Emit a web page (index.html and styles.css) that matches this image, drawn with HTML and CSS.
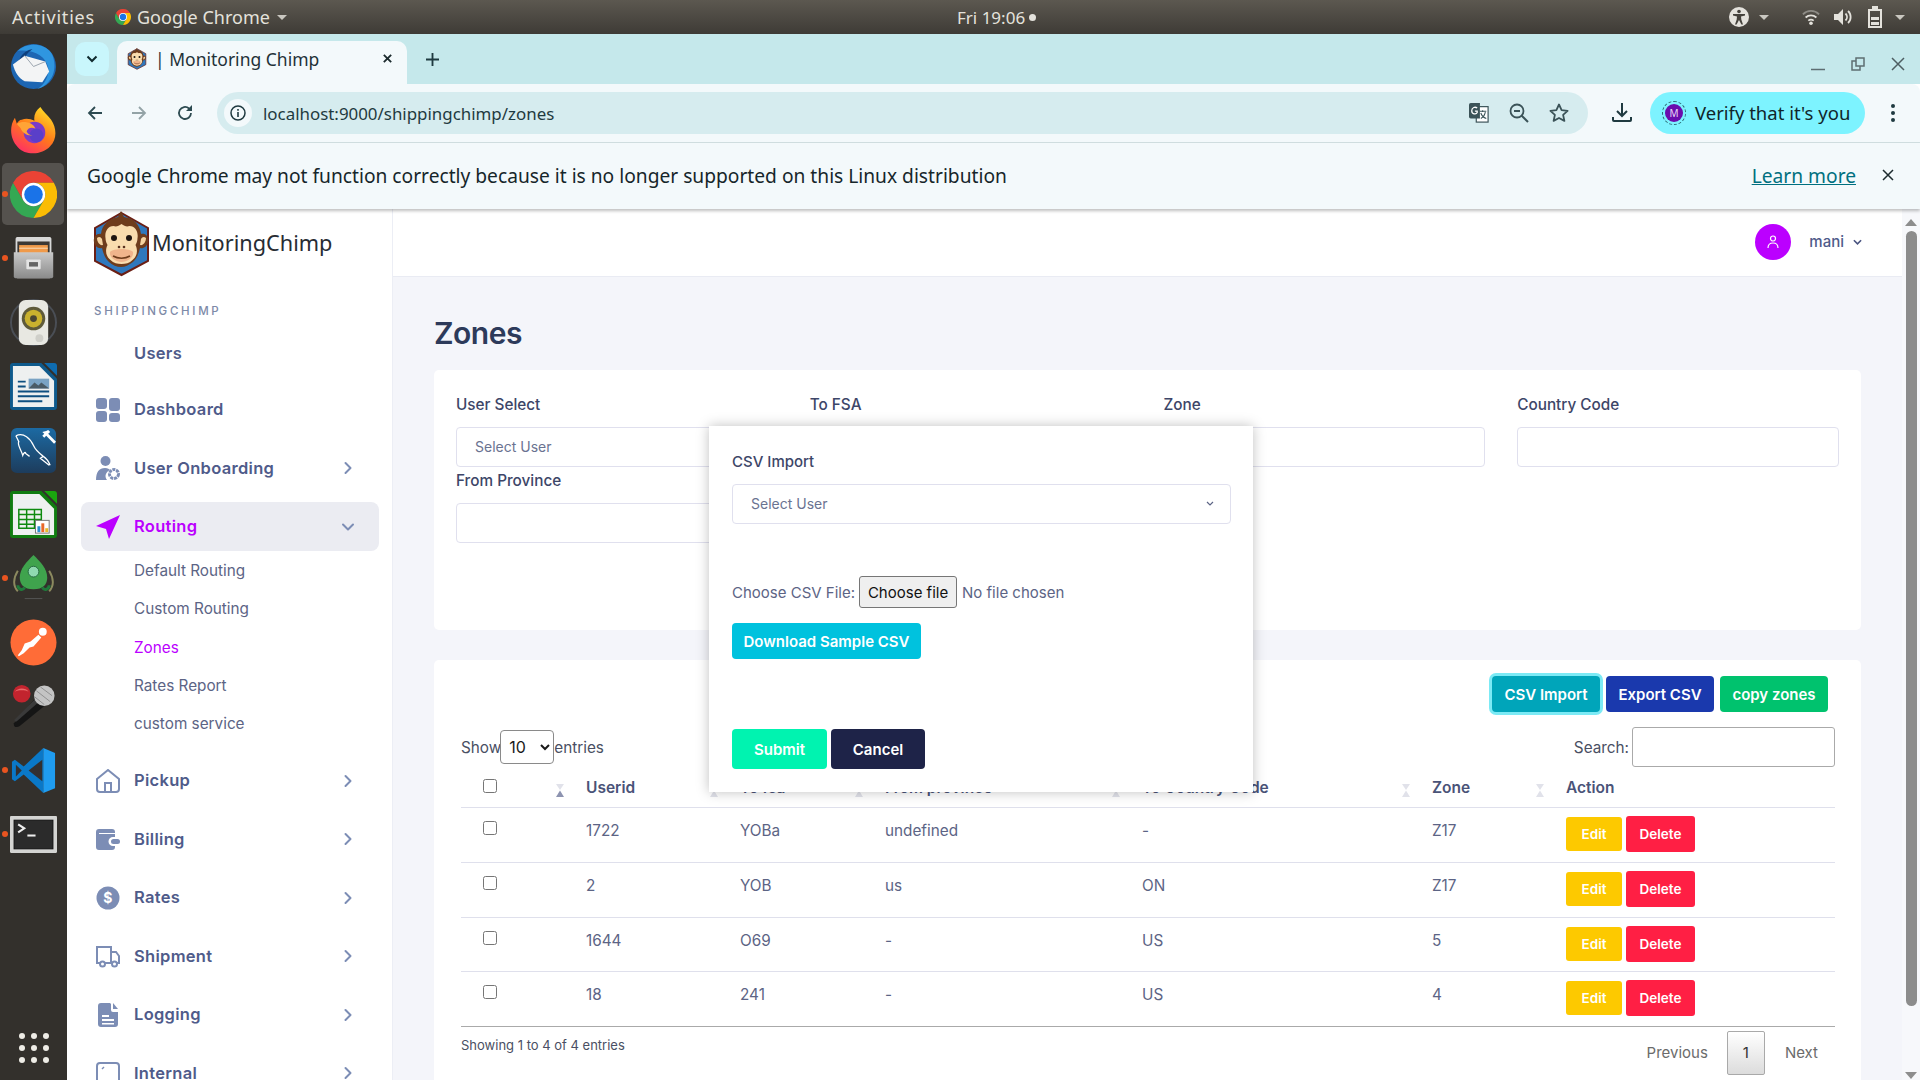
FILE: index.html
```html
<!DOCTYPE html>
<html lang="en">
  <head>
    <meta charset="UTF-8" />
    <meta name="viewport" content="width=device-width, initial-scale=1.0" />
    <title>Monitoring Chimp</title>
    <link rel="stylesheet" href="styles.css">
  </head>

  <body>
    <svg class="sprite" aria-hidden="true">
      <symbol id="chrome" viewBox="0 0 48 48">
        <path fill="#34a853" d="M3.2 12A24 24 0 0 0 24 48L34.4 30A12 12 0 0 1 13.6 30Z" />
        <path fill="#ea4335" d="M3.2 12A24 24 0 0 1 44.8 12H24A12 12 0 0 0 13.6 30Z" />
        <path fill="#fbbc04" d="M44.8 12A24 24 0 0 1 24 48L34.4 30A12 12 0 0 0 24 12Z" />
        <circle cx="24" cy="24" r="12" fill="#fff" />
        <circle cx="24" cy="24" r="9.5" fill="#1a73e8" />
      </symbol>
      <symbol id="chimp" viewBox="0 0 57 66">
        <path fill="#2f78bd" stroke="#6b1f14" stroke-width="2" d="M28.5 2 55 17v33L28.5 64 2 50V17z" />
        <path fill="#6e3c1c" d="M28 0l3 6c10 1 16 8 17 17 5-1 8 3 7 8s-5 7-8 6c-1 5-3 10-7 14-4 3-8 5-12 5s-9-2-12-5c-4-4-6-9-7-14-4 1-7-2-8-6s2-9 7-8C9 14 15 8 25 6z" />
        <path fill="#f6d3a0" d="M4 27c2-2 4-1 5 1l1 6c-3 1-6-3-6-7zM53 27c-2-2-4-1-5 1l-1 6c3 1 6-3 6-7z" />
        <path fill="#f9dcae" d="M28.5 13c-3 2-5 3-8 2-6 0-9 6-8 12 0 3 1 5 2 7-3 6-1 12 3 15 3 3 7 4 11 4s8-1 11-4c4-3 6-9 3-15 1-2 2-4 2-7 1-6-2-12-8-12-3 1-5 0-8-2z" />
        <path fill="#f0b48c" d="M17 41c3-4 20-4 23 0 1 5-5 10-11.500 10S16 46 17 41z" />
        <path fill="none" stroke="#6e3c1c" stroke-width="1.500" d="M20 45c5 3 12 3 17 0" />
        <circle cx="21" cy="27" r="3" fill="#1d1410" />
        <circle cx="36" cy="27" r="3" fill="#1d1410" />
        <circle cx="26" cy="36" r="1.300" fill="#5a3320" />
        <circle cx="31" cy="36" r="1.300" fill="#5a3320" />
      </symbol>
      <symbol id="chev-right" viewBox="0 0 10 14">
        <path fill="none" stroke="currentColor" stroke-width="2" stroke-linecap="round" stroke-linejoin="round" d="M2.500 2 7.500 7l-5 5" />
      </symbol>
      <symbol id="sort" viewBox="0 0 8 13">
        <path d="M0 0h8L4 6z" />
        <path d="M4 6.500 8 13H0z" />
      </symbol>
    </svg>

    <div class="topbar">
      <div class="topbar-left">
        <span class="topbar-activities">Activities</span>
        <svg class="topbar-chrome"><use href="#chrome" /></svg>
        <span>Google Chrome</span>
        <i class="caret"></i>
      </div>
      <div class="topbar-clock">Fri 19:06 <i class="clock-dot"></i></div>
      <div class="topbar-right">
        <svg class="tray tray-a11y" viewBox="0 0 20 20">
          <circle cx="10" cy="10" r="10" fill="#e4e2dc" />
          <circle cx="10" cy="4.500" r="1.800" fill="#45423c" />
          <path fill="#45423c" d="M4 7h12v1.600l-4 .8.300 3 1.700 5h-1.600L10 13l-2.400 4.400H6l1.700-5 .3-3-4-.8z" />
        </svg>
        <i class="caret"></i>
        <svg class="tray tray-wifi" viewBox="0 0 20 20">
          <path fill="none" stroke="#8e8c86" stroke-width="2" d="M1 7c5-5 13-5 18 0" />
          <path fill="none" stroke="#e4e2dc" stroke-width="2" d="M4 10.500c3.500-3 8.500-3 12 0M7 14c2-1.500 4-1.500 6 0" />
          <circle cx="10" cy="17" r="2" fill="#e4e2dc" />
        </svg>
        <svg class="tray tray-vol" viewBox="0 0 20 20">
          <path fill="#e4e2dc" d="M1 7h4l5-5v16l-5-5H1z" />
          <path fill="none" stroke="#e4e2dc" stroke-width="1.800" d="M12.500 6.500c2 2 2 5 0 7M15 4c3.500 3 3.500 9 0 12" />
        </svg>
        <svg class="tray tray-batt" viewBox="0 0 16 22">
          <path fill="none" stroke="#e4e2dc" stroke-width="2" d="M2 4h12v17H2z" />
          <path fill="#e4e2dc" d="M5 0h6v3H5zM4 11h8v3H4zM4 16h8v3H4z" />
        </svg>
        <i class="caret"></i>
      </div>
    </div>

    <div class="desktop">
      <aside class="dock">
        <div class="dock-item">
          <svg viewBox="0 0 48 48">
            <circle cx="24" cy="24" r="23" fill="#1d66b3" />
            <path fill="#2f96e0" d="M8 8c8-8 26-9 34 2 5 8 5 22-3 30-3 3-7 6-11 7 8-5 12-14 11-22C37 14 24 6 8 8z" />
            <path fill="#0d3f7d" d="M9 26c-2-8 3-18 14-20-5 4-8 7-8 11z" />
            <path fill="#f3f4f5" d="M3 22 15 13l21 6 4 10-7 11-18-1c-6-3-10-9-12-17z" />
            <path fill="none" stroke="#9aa3ad" d="M15 13l9 11 12-5" />
          </svg>
        </div>
        <div class="dock-item">
          <svg viewBox="0 0 48 48">
            <defs>
              <linearGradient id="fox" x1="0.800" y1="0" x2="0.200" y2="1">
                <stop offset="0" stop-color="#ffe226" />
                <stop offset="0.500" stop-color="#ff7a1a" />
                <stop offset="1" stop-color="#ff2a6a" />
              </linearGradient>
            </defs>
            <path fill="url(#fox)" d="M31 0c3 5 7 8 11 13 6 9 6 20-1 27-8 9-25 10-33 1C0 33-1 20 5 11l2 6c1-2 3-4 5-4 4-2 9-1 13 1-1-5 1-10 6-14z" />
            <circle cx="25" cy="26" r="11" fill="#7b3bc8" />
            <circle cx="27" cy="29" r="7" fill="#5a3fc9" />
            <path fill="#ffa436" d="M7 17c6-3 16-2 19 5-5-2-8 0-9 3 1 2 3 4 6 4-5 1-11-3-12-7-1-2-3-3-4-5z" />
          </svg>
        </div>
        <div class="dock-item dock-item--active">
          <i class="dock-dot"></i>
          <svg><use href="#chrome" /></svg>
        </div>
        <div class="dock-item">
          <i class="dock-dot"></i>
          <svg class="dock-narrow" viewBox="0 0 48 48">
            <defs>
              <linearGradient id="cab" x1="0" y1="0" x2="0" y2="1">
                <stop offset="0" stop-color="#c9c9c9" />
                <stop offset="1" stop-color="#8b8b8b" />
              </linearGradient>
            </defs>
            <rect x="4" y="0" width="40" height="46" rx="2" fill="#d8d8d8" />
            <rect x="6" y="5" width="36" height="14" fill="#3c3834" />
            <rect x="8" y="9" width="32" height="9" fill="#f09a4a" />
            <rect x="8" y="12" width="32" height="1" fill="#fbe3c4" />
            <path fill="url(#cab)" d="M2 17h44v27a2 2 0 0 1-2 2H4a2 2 0 0 1-2-2z" />
            <rect x="16" y="25" width="16" height="11" rx="1" fill="#e4e4e4" />
            <rect x="19" y="28" width="10" height="5" fill="#666" />
          </svg>
        </div>
        <div class="dock-item">
          <svg viewBox="0 0 48 48">
            <circle cx="24" cy="24" r="23" fill="none" stroke="#4a4e55" stroke-width="2" />
            <rect x="9" y="1" width="30" height="46" rx="7" fill="#e8e8e2" />
            <circle cx="24" cy="20" r="12" fill="#5e5a3a" />
            <circle cx="24" cy="20" r="9" fill="#c9b12e" />
            <circle cx="24" cy="20" r="3.500" fill="#4a4632" />
            <circle cx="30" cy="40" r="4" fill="#cfcfc9" />
          </svg>
        </div>
        <div class="dock-item">
          <svg viewBox="0 0 48 48">
            <path fill="#0f5a8c" d="M3 0h29l16 16v29a3 3 0 0 1-3 3H3a3 3 0 0 1-3-3V3a3 3 0 0 1 3-3z" />
            <path fill="#eef0f0" d="M3 3h27l15 15v27H3z" />
            <path fill="#0f6cb0" d="M35 0h10a3 3 0 0 1 3 3v10z" />
            <path fill="#0e4f80" d="M8 18h8v2H8zM8 23h8v2H8zM8 28h32v2H8zM8 33h32v2H8zM8 38h25v2H8z" />
            <rect x="19" y="16" width="21" height="10" fill="#7aa3c4" />
            <path fill="#4a5b66" d="M19 26l6-6 4 3 3-3 8 6z" />
          </svg>
        </div>
        <div class="dock-item">
          <svg viewBox="0 0 48 48">
            <defs>
              <linearGradient id="wb" x1="0" y1="0" x2="0" y2="1">
                <stop offset="0" stop-color="#1c6aa3" />
                <stop offset="1" stop-color="#1d3c5c" />
              </linearGradient>
            </defs>
            <rect width="46" height="46" x="1" y="1" rx="6" fill="url(#wb)" />
            <path fill="none" stroke="#fff" stroke-width="1.300" d="M6 9c8-4 15 3 18 10 2 5 6 8 10 11 3 2 5 4 7 9M6 9l3 6c-2 3 2 7 4 14 1-3 3-4 3-2l4 3M34 30l-3 2 9 7" />
            <path fill="#fff" d="M33 5l2 2-2 2 2 2 2-2 8 8 2-2-8-8 2-2-2-2-2 1z" />
          </svg>
        </div>
        <div class="dock-item">
          <svg viewBox="0 0 48 48">
            <path fill="#107c10" d="M3 0h29l16 16v29a3 3 0 0 1-3 3H3a3 3 0 0 1-3-3V3a3 3 0 0 1 3-3z" />
            <path fill="#eef0f0" d="M3 3h27l15 15v27H3z" />
            <path fill="#1aa50f" d="M35 0h10a3 3 0 0 1 3 3v10z" />
            <path fill="none" stroke="#0e8a0e" stroke-width="1.500" d="M9 19h23v19H9zM9 24h23M9 29h23M9 34h23M17 19v19M25 19v19" />
            <rect x="26" y="30" width="14" height="13" fill="#fff" stroke="#777" />
            <path fill="#2a8fd0" d="M28 36h3v6h-3z" />
            <path fill="#e8682a" d="M32 33h3v9h-3z" />
            <path fill="#e8b82a" d="M36 38h3v4h-3z" />
          </svg>
        </div>
        <div class="dock-item">
          <i class="dock-dot"></i>
          <svg viewBox="0 0 48 48">
            <path fill="none" stroke="#8c8a5f" stroke-width="2" d="M8 16C3 24 3 32 8 37M40 16c5 8 5 16 0 21" />
            <path fill="#3fa34d" d="M24 0c7 7 14 14 14 23 0 7-4 12-14 12S10 30 10 23C10 14 17 7 24 0z" />
            <path fill="none" stroke="#1f7a3a" stroke-width="3" d="M8 31c0 4 5 6 7 2M40 31c0 4-5 6-7 2" />
            <circle cx="24" cy="17" r="5.500" fill="#8fd9b0" stroke="#256b3f" />
            <path fill="#555" d="M15 44h18v1H15z" />
          </svg>
        </div>
        <div class="dock-item">
          <svg viewBox="0 0 48 48">
            <circle cx="24" cy="24" r="23.500" fill="#ff6c37" />
            <circle cx="33.500" cy="13" r="4" fill="#fff" />
            <path fill="#fff" d="M29 16l3 3-8 9-4 1-6 6-5 3-1-1 4-5 3-7 6-2z" />
          </svg>
        </div>
        <div class="dock-item">
          <svg viewBox="0 0 48 48">
            <path fill="#151515" d="M27 14l10 8L10 44c-3 2-7 1-6-3z" />
            <path fill="#3a3a3a" d="M26 16l4 3L7 39c-2 1-3 0-2-2z" />
            <circle cx="12" cy="11" r="9" fill="#c2242e" />
            <path fill="#e96a6a" d="M5 9c2-4 11-5 14 0-4-2-10-2-14 0z" />
            <circle cx="35" cy="13" r="10.500" fill="#c4c4c4" />
            <path fill="none" stroke="#8f8f8f" d="M27 8l14 11M31 4l12 9M25 14l10 8" />
          </svg>
        </div>
        <div class="dock-item">
          <i class="dock-dot"></i>
          <svg viewBox="0 0 48 48">
            <path fill="#0a78c7" d="M34 1 14 20 5 13l-3 2v18l3 2 9-7 20 19V1z" />
            <path fill="#1f9cf0" d="M34 1l12 5v36l-12 5z" />
            <path fill="#333030" d="M33 13v22L19 24z" />
            <path fill="#333030" d="M6 18l6 6-6 6z" />
          </svg>
        </div>
        <div class="dock-item">
          <i class="dock-dot"></i>
          <svg class="dock-term" viewBox="0 0 46 36">
            <rect width="46" height="36" rx="1" fill="#d4d4d2" />
            <rect x="4" y="4" width="38" height="28" fill="#2b2b2b" stroke="#111" />
            <path fill="none" stroke="#eee" stroke-width="2" d="M8 8l6 4-6 4" />
            <path stroke="#eee" stroke-width="2" d="M17 19h8" />
          </svg>
        </div>
        <div class="dock-grid">
          <i></i><i></i><i></i><i></i><i></i><i></i><i></i><i></i><i></i>
        </div>
      </aside>

      <div class="window">
        <div class="tabstrip">
          <button class="tab-search">
            <svg viewBox="0 0 12 8" width="12" height="8"><path fill="none" stroke="#102a2e" stroke-width="2" d="M1.500 1.500 6 6l4.500-4.500" /></svg>
          </button>
          <div class="tab">
            <svg class="tab-fav"><use href="#chimp" /></svg>
            <span class="tab-title">| Monitoring Chimp</span>
            <svg class="tab-close" viewBox="0 0 12 12"><path stroke="#1c2b2e" stroke-width="2" d="M2 2l8 8M10 2l-8 8" /></svg>
          </div>
          <svg class="tab-new" viewBox="0 0 14 14"><path stroke="#1f3a40" stroke-width="2" d="M7 0v14M0 7h14" /></svg>
          <div class="wincontrols">
            <svg viewBox="0 0 14 14"><path stroke="#5e6e72" stroke-width="1.500" d="M0 12.500h14" /></svg>
            <svg viewBox="0 0 14 14"><path fill="none" stroke="#5e6e72" stroke-width="1.500" d="M5 1h8v8H5zM5 4H1v9h8V9" /></svg>
            <svg viewBox="0 0 14 14"><path stroke="#4e5e62" stroke-width="1.500" d="M1 1l12 12M13 1 1 13" /></svg>
          </div>
        </div>

        <div class="toolbar">
          <svg class="tool tool-back" viewBox="0 0 16 16"><path fill="none" stroke="#2c4a50" stroke-width="1.800" d="M15 8H2M8 2 2 8l6 6" /></svg>
          <svg class="tool tool-fwd" viewBox="0 0 16 16"><path fill="none" stroke="#93a3a6" stroke-width="1.800" d="M1 8h13M8 2l6 6-6 6" /></svg>
          <svg class="tool tool-reload" viewBox="0 0 16 16"><path fill="none" stroke="#2c4a50" stroke-width="1.800" d="M14 8a6 6 0 1 1-2-4.500L14 5" /><path fill="#2c4a50" d="M15 0v6H9z" /></svg>
          <div class="omnibox">
            <span class="omni-chip">
              <svg viewBox="0 0 16 16" width="16" height="16"><circle cx="8" cy="8" r="7" fill="none" stroke="#1f3a40" stroke-width="1.500" /><path stroke="#1f3a40" stroke-width="1.600" d="M8 7v5M8 4v1.800" /></svg>
            </span>
            <span class="omni-url">localhost:9000/shippingchimp/zones</span>
            <svg class="omni-icon" viewBox="0 0 22 22">
              <rect x="8" y="4" width="13" height="17" fill="#fff" stroke="#3b5358" stroke-width="1.300" />
              <path fill="#3b5358" d="M2 0h10v17H2a2 2 0 0 1-2-2V2a2 2 0 0 1 2-2z" />
              <path stroke="#3b5358" stroke-width="1.200" fill="none" d="M12 9h7M15 8v2M18 10c-1 4-3 6-5 7M13 11c1 3 3 5 6 6" />
              <path fill="none" stroke="#fff" stroke-width="1.400" d="M9 5.500C7 4 3 4.500 3 8.500s5 4.500 6 2V9H6.500" />
            </svg>
            <svg class="omni-icon" viewBox="0 0 20 20">
              <circle cx="8" cy="8" r="6.500" fill="none" stroke="#3b5358" stroke-width="1.800" />
              <path stroke="#3b5358" stroke-width="2" d="M12.500 12.500 19 19M5 8h6" />
            </svg>
            <svg class="omni-icon" viewBox="0 0 20 20">
              <path fill="none" stroke="#3b5358" stroke-width="1.800" stroke-linejoin="round" d="M10 1.500l2.600 5.600 6 .7-4.500 4.100 1.300 6L10 15l-5.400 2.900 1.300-6L1.400 7.800l6-.7z" />
            </svg>
          </div>
          <svg class="tool tool-dl" viewBox="0 0 20 20"><path fill="none" stroke="#1f3a40" stroke-width="2" d="M10 0v12M5 8l5 5 5-5M1 14v3a1 1 0 0 0 1 1h16a1 1 0 0 0 1-1v-3" /></svg>
          <div class="verify">
            <span class="verify-ring"><span class="verify-avatar">M</span></span>
            <span>Verify that it's you</span>
          </div>
          <svg class="tool tool-menu" viewBox="0 0 4 20"><circle cx="2" cy="3" r="2" fill="#1f3a40" /><circle cx="2" cy="10" r="2" fill="#1f3a40" /><circle cx="2" cy="17" r="2" fill="#1f3a40" /></svg>
        </div>

        <div class="infobar">
          <span>Google Chrome may not function correctly because it is no longer supported on this Linux distribution</span>
          <a class="infobar-link">Learn more</a>
          <svg class="infobar-close" viewBox="0 0 12 12"><path stroke="#1c2b2e" stroke-width="1.500" d="M1 1l10 10M11 1 1 11" /></svg>
        </div>

        <div class="page">
          <nav class="sidebar">
            <div class="brand">
              <svg class="brand-logo"><use href="#chimp" /></svg>
              <span>MonitoringChimp</span>
            </div>
            <div class="nav-section">SHIPPINGCHIMP</div>
            <a class="nav-item nav-item--plain">Users</a>
            <a class="nav-item">
              <svg class="nav-icon" viewBox="0 0 24 24"><rect width="11" height="11" x="0" y="0" rx="3" /><rect width="11" height="13" x="13" y="0" rx="3" /><rect width="11" height="11" x="0" y="13" rx="3" /><rect width="11" height="9" x="13" y="15" rx="3" /></svg>
              <span>Dashboard</span>
            </a>
            <a class="nav-item">
              <svg class="nav-icon" viewBox="0 0 24 24">
                <circle cx="9.500" cy="5" r="5" />
                <path d="M0 24c0-8 3-12 9-12 3 0 4 1 5 2-4 2-6 6-3 10z" />
                <circle cx="18" cy="18" r="4.500" fill="none" stroke="currentColor" stroke-width="3" stroke-dasharray="3 .8" />
              </svg>
              <span>User Onboarding</span>
              <svg class="nav-chev"><use href="#chev-right" /></svg>
            </a>
            <a class="nav-item nav-item--active">
              <svg class="nav-icon" viewBox="0 0 24 24"><path d="M24 0 0 11l10 3 3 10z" /></svg>
              <span>Routing</span>
              <svg class="nav-chev nav-chev--open"><use href="#chev-right" /></svg>
            </a>
            <div class="nav-sub">
              <a>Default Routing</a>
              <a>Custom Routing</a>
              <a class="is-current">Zones</a>
              <a>Rates Report</a>
              <a>custom service</a>
            </div>
            <a class="nav-item">
              <svg class="nav-icon" viewBox="0 0 24 24"><path fill="none" stroke="currentColor" stroke-width="2" d="M1 10 12 1l11 9v10a3 3 0 0 1-3 3H4a3 3 0 0 1-3-3zM9 23v-9h6v9" /></svg>
              <span>Pickup</span>
              <svg class="nav-chev"><use href="#chev-right" /></svg>
            </a>
            <a class="nav-item">
              <svg class="nav-icon" viewBox="0 0 24 24"><path d="M3 2h13a3 3 0 0 1 3 3v1H3v1h16v3h-2a4.500 4.500 0 0 0 0 9h2v1a3 3 0 0 1-3 3H3a3 3 0 0 1-3-3V5a3 3 0 0 1 3-3z" /><rect x="15" y="12" width="9" height="5" rx="2.500" /></svg>
              <span>Billing</span>
              <svg class="nav-chev"><use href="#chev-right" /></svg>
            </a>
            <a class="nav-item">
              <svg class="nav-icon" viewBox="0 0 24 24"><circle cx="12" cy="12" r="11.500" /><text x="12" y="17" text-anchor="middle" class="nav-dollar">$</text></svg>
              <span>Rates</span>
              <svg class="nav-chev"><use href="#chev-right" /></svg>
            </a>
            <a class="nav-item">
              <svg class="nav-icon" viewBox="0 0 24 24"><path fill="none" stroke="currentColor" stroke-width="2" d="M4 19H1V3h14v16H9M15 8h5l3 4v7h-2M15 19h1" /><circle cx="6.500" cy="20" r="2.500" fill="none" stroke="currentColor" stroke-width="2" /><circle cx="18.500" cy="20" r="2.500" fill="none" stroke="currentColor" stroke-width="2" /></svg>
              <span>Shipment</span>
              <svg class="nav-chev"><use href="#chev-right" /></svg>
            </a>
            <a class="nav-item">
              <svg class="nav-icon" viewBox="0 0 24 24"><path d="M5 0h9l1 1v6a2 2 0 0 0 2 2h5v12a3 3 0 0 1-3 3H5a3 3 0 0 1-3-3V3a3 3 0 0 1 3-3z" /><path d="M17 0l5 6h-5z" /><path fill="#fff" d="M6 12h7v2H6zM6 16h12v2H6zM6 20h12v1.500H6z" /></svg>
              <span>Logging</span>
              <svg class="nav-chev"><use href="#chev-right" /></svg>
            </a>
            <a class="nav-item">
              <svg class="nav-icon" viewBox="0 0 24 24"><rect x="1" y="2" width="22" height="20" rx="3" fill="none" stroke="currentColor" stroke-width="2" /><path stroke="currentColor" stroke-width="1.500" d="M6 8l2-2" /></svg>
              <span>Internal</span>
              <svg class="nav-chev"><use href="#chev-right" /></svg>
            </a>
          </nav>

          <main class="main">
            <header class="main-header">
              <span class="user-avatar">
                <svg viewBox="0 0 12 14" width="12" height="14"><circle cx="6" cy="3.500" r="2.500" fill="none" stroke="#fff" stroke-width="1.200" /><path fill="none" stroke="#fff" stroke-width="1.200" d="M1 13c0-3 2-5 5-5s5 2 5 5" /></svg>
              </span>
              <span class="user-name">mani</span>
              <svg class="user-chev" viewBox="0 0 10 6"><path fill="none" stroke="#4a5480" stroke-width="1.800" d="M1 1l4 4 4-4" /></svg>
            </header>

            <div class="content">
              <h1 class="page-title">Zones</h1>

              <section class="card filter-card">
                <div class="field">
                  <label>User Select</label>
                  <div class="input">Select User</div>
                </div>
                <div class="field">
                  <label>To FSA</label>
                  <div class="input"></div>
                </div>
                <div class="field">
                  <label>Zone</label>
                  <div class="input"></div>
                </div>
                <div class="field">
                  <label>Country Code</label>
                  <div class="input"></div>
                </div>
                <div class="field">
                  <label>From Province</label>
                  <div class="input"></div>
                </div>
              </section>

              <section class="card table-card">
                <div class="table-actions">
                  <button class="btn btn-import">CSV Import</button>
                  <button class="btn btn-export">Export CSV</button>
                  <button class="btn btn-copy">copy zones</button>
                </div>
                <div class="table-tools">
                  <label class="tool-label">Show
                    <select class="len-select"><option>10</option></select>
                    entries</label>
                  <label class="tool-label">Search:
                    <input class="search-input" type="text" />
                  </label>
                </div>
                <table class="zones-table">
                  <thead>
                    <tr>
                      <th class="col-check"><div class="th-inner"><input type="checkbox" /><svg class="sort" viewBox="0 0 8 13"><path d="M0 0h8L4 6z" /><path class="sort-on" d="M4 6.500 8 13H0z" /></svg></div></th>
                      <th class="col-user"><div class="th-inner"><span>Userid</span><svg class="sort"><use href="#sort" /></svg></div></th>
                      <th class="col-fsa"><div class="th-inner"><span>To fsa</span><svg class="sort"><use href="#sort" /></svg></div></th>
                      <th class="col-prov"><div class="th-inner"><span>From province</span><svg class="sort"><use href="#sort" /></svg></div></th>
                      <th class="col-country"><div class="th-inner"><span>To Country Code</span><svg class="sort"><use href="#sort" /></svg></div></th>
                      <th class="col-zone"><div class="th-inner"><span>Zone</span><svg class="sort"><use href="#sort" /></svg></div></th>
                      <th class="col-action">Action</th>
                    </tr>
                  </thead>
                  <tbody>
                    <tr>
                      <td class="col-check"><input type="checkbox" /></td>
                      <td>1722</td><td>YOBa</td><td>undefined</td><td>-</td><td>Z17</td>
                      <td><div class="row-actions"><button class="btn-edit">Edit</button><button class="btn-delete">Delete</button></div></td>
                    </tr>
                    <tr>
                      <td class="col-check"><input type="checkbox" /></td>
                      <td>2</td><td>YOB</td><td>us</td><td>ON</td><td>Z17</td>
                      <td><div class="row-actions"><button class="btn-edit">Edit</button><button class="btn-delete">Delete</button></div></td>
                    </tr>
                    <tr>
                      <td class="col-check"><input type="checkbox" /></td>
                      <td>1644</td><td>O69</td><td>-</td><td>US</td><td>5</td>
                      <td><div class="row-actions"><button class="btn-edit">Edit</button><button class="btn-delete">Delete</button></div></td>
                    </tr>
                    <tr>
                      <td class="col-check"><input type="checkbox" /></td>
                      <td>18</td><td>241</td><td>-</td><td>US</td><td>4</td>
                      <td><div class="row-actions"><button class="btn-edit">Edit</button><button class="btn-delete">Delete</button></div></td>
                    </tr>
                  </tbody>
                </table>
                <div class="table-foot">
                  <span class="table-info">Showing 1 to 4 of 4 entries</span>
                  <div class="pager">
                    <a>Previous</a>
                    <a class="pager-current">1</a>
                    <a>Next</a>
                  </div>
                </div>
              </section>
            </div>

            <!-- modal sits over the cards -->
            <div class="modal">
              <label class="modal-label">CSV Import</label>
              <div class="input modal-select">
                <span>Select User</span>
                <svg viewBox="0 0 8 6" width="8" height="6"><path fill="none" stroke="#5c6485" stroke-width="1.200" d="M1 1l3 3 3-3" /></svg>
              </div>
              <div class="file-row">
                <label>Choose CSV File:</label>
                <button class="file-btn">Choose file</button>
                <span>No file chosen</span>
              </div>
              <button class="btn btn-download">Download Sample CSV</button>
              <div class="modal-foot">
                <button class="btn btn-submit">Submit</button>
                <button class="btn btn-cancel">Cancel</button>
              </div>
            </div>
          </main>

          <div class="scrollbar">
            <i class="scroll-up"></i>
            <i class="scroll-thumb"></i>
            <i class="scroll-down"></i>
          </div>
        </div>
      </div>
    </div>
  </body>
</html>
```

FILE: styles.css
```css
* {
  box-sizing: border-box;
}
html,
body {
  margin: 0;
  height: 1080px;
  overflow: hidden;
}
body {
  display: flex;
  flex-direction: column;
  font-family: "Inter", "Liberation Sans", sans-serif;
  color: #5c6485;
}
button {
  font-family: inherit;
  cursor: pointer;
}
.sprite {
  position: absolute;
  width: 0;
  height: 0;
}

/* top bar */
.topbar {
  height: 34px;
  flex: none;
  display: grid;
  grid-template-columns: 957px auto 1fr;
  align-items: center;
  background: linear-gradient(#5c5850, #3e3b36);
  color: #e4e2dc;
  font-family: "Noto Sans", sans-serif;
  font-size: 18px;
}
.topbar-left {
  display: flex;
  align-items: center;
  padding-left: 12px;
}
.topbar-activities {
  margin-right: 20px;
  letter-spacing: 0.800px;
}
.topbar-chrome {
  width: 16px;
  height: 16px;
  margin-right: 6px;
}
.caret {
  display: inline-block;
  width: 0;
  height: 0;
  border-left: 5px solid transparent;
  border-right: 5px solid transparent;
  border-top: 5px solid #c9c7c0;
  margin-left: 7px;
}
.topbar-clock {
  font-size: 17px;
  display: flex;
  align-items: center;
  gap: 4px;
}
.clock-dot {
  width: 7px;
  height: 7px;
  border-radius: 50%;
  background: #e4e2dc;
}
.topbar-right {
  display: flex;
  align-items: center;
  justify-content: flex-end;
  padding-right: 15px;
}
.tray {
  width: 20px;
  height: 20px;
}
.tray-a11y {
  margin-right: 3px;
}
.tray-wifi {
  margin-left: 33px;
  margin-right: 13px;
  width: 18px;
}
.tray-vol {
  margin-right: 14px;
}
.tray-batt {
  width: 16px;
  height: 22px;
  margin-right: 5px;
}

/* dock */
.desktop {
  flex: 1;
  display: flex;
  min-height: 0;
}
.dock {
  width: 67px;
  flex: none;
  display: flex;
  flex-direction: column;
  background: #33302c;
}
.dock-item {
  height: 64px;
  flex: none;
  display: flex;
  align-items: center;
  justify-content: center;
  position: relative;
}
.dock-item svg {
  width: 47px;
  height: 47px;
}
.dock-item .dock-narrow {
  width: 43px;
  height: 45px;
}
.dock-item .dock-term {
  height: 37px;
}
.dock-item--active::before {
  content: "";
  position: absolute;
  left: 2px;
  top: 1px;
  width: 62px;
  height: 62px;
  border-radius: 5px;
  background: #55524e;
}
.dock-item--active svg {
  position: relative;
}
.dock-dot {
  position: absolute;
  left: 2px;
  top: 50%;
  width: 6px;
  height: 6px;
  margin-top: -3px;
  border-radius: 50%;
  background: #e95420;
  z-index: 1;
}
.dock-grid {
  margin-top: auto;
  margin-bottom: 17px;
  align-self: center;
  display: grid;
  grid-template-columns: repeat(3, 6px);
  gap: 6px;
}
.dock-grid i {
  height: 6px;
  border-radius: 50%;
  background: #eeece6;
}

/* chrome */
.window {
  flex: 1;
  min-width: 0;
  display: flex;
  flex-direction: column;
  font-family: "Noto Sans", sans-serif;
}
.tabstrip {
  height: 50px;
  flex: none;
  display: flex;
  align-items: flex-end;
  background: #c5e8eb;
  padding-left: 8px;
  position: relative;
}
.tab-search {
  width: 34px;
  height: 34px;
  margin-bottom: 8px;
  margin-right: 8px;
  border: 0;
  border-radius: 10px;
  background: #c9f6fc;
  display: flex;
  align-items: center;
  justify-content: center;
  padding: 0;
}
.tab {
  width: 290px;
  height: 43px;
  display: flex;
  align-items: center;
  background: #f3f9fb;
  border-radius: 10px 10px 0 0;
  padding: 0 14px 8px 10px;
  color: #1f3238;
  font-size: 17.500px;
}
.tab-fav {
  width: 20px;
  height: 22px;
  margin-right: 8px;
}
.tab-title {
  flex: 1;
}
.tab-close {
  width: 11px;
  height: 11px;
}
.tab-new {
  width: 13px;
  height: 13px;
  margin: 0 0 18px 19px;
}
.wincontrols {
  margin-left: auto;
  display: flex;
  gap: 26px;
  padding-right: 15px;
  margin-bottom: 13px;
}
.wincontrols svg {
  width: 14px;
  height: 14px;
}
.toolbar {
  height: 59px;
  flex: none;
  display: flex;
  align-items: center;
  background: #f3f9fb;
  border-bottom: 1px solid #d2e0e2;
  border-radius: 8px 8px 0 0;
  padding-left: 20px;
}
.tool {
  width: 16px;
  height: 16px;
  flex: none;
}
.tool-fwd {
  margin-left: 28px;
}
.tool-reload {
  margin-left: 30px;
}
.omnibox {
  width: 1371px;
  height: 42px;
  margin-left: 24px;
  border-radius: 21px;
  background: #d6ecef;
  display: flex;
  align-items: center;
  padding-left: 7px;
  padding-right: 19px;
  flex: none;
}
.omni-chip {
  width: 28px;
  height: 28px;
  border-radius: 50%;
  background: #f3f9fb;
  display: flex;
  align-items: center;
  justify-content: center;
  flex: none;
}
.omni-url {
  margin-left: 11px;
  font-size: 16.900px;
  color: #1f3a40;
  flex: 1;
}
.omni-icon {
  width: 20px;
  height: 20px;
  margin-left: 20px;
  flex: none;
}
.tool-dl {
  width: 20px;
  height: 20px;
  margin-left: 24px;
}
.verify {
  width: 215px;
  height: 42px;
  margin-left: 18px;
  flex: none;
  border-radius: 21px;
  background: #7df3ff;
  display: flex;
  align-items: center;
  padding-left: 12px;
  padding-bottom: 1px;
  gap: 9px;
  color: #10262a;
  font-size: 18.500px;
}
.verify-ring {
  width: 24px;
  height: 24px;
  border-radius: 50%;
  border: 1px dashed #2d6f78;
  display: flex;
  align-items: center;
  justify-content: center;
}
.verify-avatar {
  width: 18px;
  height: 18px;
  border-radius: 50%;
  background: #6a0dad;
  color: #e8d9f5;
  font-size: 10px;
  text-align: center;
  line-height: 18px;
}
.tool-menu {
  width: 4px;
  height: 20px;
  margin-left: 26px;
}
.infobar {
  height: 66px;
  flex: none;
  display: flex;
  align-items: center;
  background: #f3f9fb;
  box-shadow: 0 2px 3px rgba(0, 0, 0, 0.25);
  padding-left: 20px;
  padding-bottom: 2px;
  color: #16262a;
  font-size: 19.200px;
  position: relative;
  z-index: 2;
}
.infobar-link {
  margin-left: auto;
  color: #00707f;
  text-decoration: underline;
}
.infobar-close {
  width: 12px;
  height: 12px;
  margin: 0 26px 0 26px;
}

/* page */
.page {
  flex: 1;
  min-height: 0;
  display: flex;
  overflow: hidden;
  font-family: "Inter", "Liberation Sans", sans-serif;
}
.sidebar {
  width: 326px;
  flex: none;
  background: #fff;
  border-right: 1px solid #eceef5;
  overflow: hidden;
  padding: 0 13px 0 14px;
}
.brand {
  height: 68px;
  display: flex;
  align-items: center;
  padding-left: 12px;
  font-family: "Noto Sans", sans-serif;
  font-size: 21.700px;
  color: #272c33;
}
.brand-logo {
  width: 57px;
  height: 66px;
  margin-top: 2px;
  margin-right: 2px;
}
.brand span {
  margin-top: -2px;
}
.nav-section {
  margin: 26px 0 11.500px 13px;
  height: 16px;
  line-height: 16px;
  font-size: 11.500px;
  font-weight: 500;
  letter-spacing: 2.700px;
  color: #7d8aa8;
}
.nav-item {
  height: 49px;
  margin-bottom: 9.500px;
  display: flex;
  align-items: center;
  padding: 0 26px 0 15px;
  border-radius: 8px;
  font-size: 16.500px;
  font-weight: 600;
  letter-spacing: 0.300px;
  color: #4f5b8a;
}
.nav-item span {
  margin-top: -1px;
}
.nav-item--plain {
  height: 45px;
  padding-left: 53px;
}
.nav-item--active {
  background: #ebecf2;
  color: #bb00ff;
  margin-bottom: 0;
}
.nav-icon {
  width: 24px;
  height: 24px;
  margin-right: 14px;
  fill: #7c8db5;
  color: #7c8db5;
  flex: none;
}
.nav-item--active .nav-icon {
  fill: #bb00ff;
}
.nav-dollar {
  fill: #fff;
  font-size: 14px;
  font-weight: 700;
}
.nav-chev {
  margin-left: auto;
  width: 10px;
  height: 14px;
  color: #7c8db5;
}
.nav-chev--open {
  transform: rotate(90deg);
}
.nav-sub {
  padding-top: 1px;
  margin-bottom: 13px;
  padding-left: 53px;
  font-size: 15.300px;
  color: #5c6485;
}
.nav-sub a {
  display: block;
  height: 38.300px;
  line-height: 38.300px;
}
.nav-sub .is-current {
  color: #bb00ff;
}

.main {
  flex: 1;
  min-width: 0;
  position: relative;
  background: #f4f5fa;
  overflow: hidden;
}
.main-header {
  height: 68px;
  background: #fff;
  border-bottom: 1px solid #e9ebf3;
  display: flex;
  align-items: center;
  justify-content: flex-end;
  padding-right: 40px;
  padding-bottom: 2px;
}
.user-avatar {
  width: 36px;
  height: 36px;
  border-radius: 50%;
  background: #bb00ff;
  display: flex;
  align-items: center;
  justify-content: center;
}
.user-name {
  margin-left: 18px;
  font-size: 15px;
  font-weight: 500;
  color: #4f5b8a;
}
.user-chev {
  width: 9px;
  height: 6px;
  margin-left: 9px;
}
.content {
  padding: 37px 41px 0;
}
.page-title {
  margin: 0 0 18px;
  font-size: 30px;
  line-height: 38px;
  font-weight: 600;
  color: #2d3a5a;
  letter-spacing: -0.500px;
}
.card {
  background: #fff;
  border-radius: 5px;
}

/* filter form */
.filter-card {
  height: 260px;
  margin-bottom: 30px;
  padding: 25px 22px 0;
  display: grid;
  grid-template-columns: repeat(4, 1fr);
  column-gap: 32px;
  row-gap: 4px;
  align-content: start;
}
.field label {
  display: block;
  height: 20px;
  line-height: 20px;
  margin-bottom: 12px;
  font-size: 15.300px;
  font-weight: 500;
  color: #3d4668;
}
.input {
  height: 40px;
  border: 1px solid #e0e0ee;
  border-radius: 4px;
  background: #fff;
  padding-left: 18px;
  font-size: 14px;
  line-height: 38px;
  color: #6a7391;
}

/* table card */
.table-card {
  padding: 16px 26px 40px 27px;
}
.table-actions {
  display: flex;
  justify-content: flex-end;
  gap: 6px;
  padding-right: 7px;
}
.btn {
  height: 36px;
  border: 0;
  border-radius: 4px;
  color: #fff;
  font-size: 15px;
  font-weight: 600;
  padding: 0;
}
.btn-import {
  width: 108px;
  background: #00a5ba;
  box-shadow: 0 0 0 3px #7ceaf5;
}
.btn-export {
  width: 108px;
  background: #1a39ad;
}
.btn-copy {
  width: 108px;
  background: #00c26e;
}
.table-tools {
  margin-top: 15px;
  height: 40px;
  display: flex;
  align-items: center;
  justify-content: space-between;
}
.tool-label {
  display: flex;
  align-items: center;
  gap: 0;
  font-size: 15.300px;
  color: #4a4f63;
}
.len-select {
  width: 54px;
  height: 34px;
  margin-left: -1px;
  margin-right: 0;
  font-family: inherit;
  font-size: 16px;
  color: #1a1a1a;
  background: #fff;
  border: 1px solid #8a8a8a;
  border-radius: 4px;
  padding-left: 4px;
}
.search-input {
  width: 203px;
  height: 40px;
  margin-left: 3px;
  border: 1px solid #aaa;
  border-radius: 3px;
  background: #fff;
}
.zones-table {
  width: 1374px;
  margin-top: 2px;
  table-layout: fixed;
  border-collapse: collapse;
  font-size: 15.300px;
}
.zones-table th {
  height: 38px;
  padding: 0 10px 0 12px;
  border-bottom: 1px solid #dfe0ec;
  text-align: left;
  font-size: 15.500px;
  font-weight: 600;
  color: #4a5378;
}
.zones-table td {
  height: 55px;
  padding: 13px 12px 0;
  vertical-align: top;
  line-height: 20px;
  border-bottom: 1px solid #dfe0ec;
  color: #5c6485;
}
.zones-table tbody tr:nth-child(3) td {
  height: 54px;
}
.zones-table tbody tr:last-child td {
  border-bottom-color: #aaa;
}
.th-inner {
  display: flex;
  align-items: center;
  justify-content: space-between;
}
.zones-table .col-check {
  width: 113px;
  padding-left: 22px;
}
.zones-table td.col-check {
  padding-top: 13px;
  line-height: 0;
}
.col-check input {
  width: 14px;
  height: 14px;
  margin: 0;
}
.col-check .th-inner input {
  margin-top: -4px;
}
.col-user { width: 154px; }
.col-fsa { width: 145px; }
.col-prov { width: 257px; }
.col-country { width: 290px; }
.col-zone { width: 134px; }
.sort {
  width: 8px;
  height: 13px;
  flex: none;
  margin-top: 5px;
  fill: #e1e2ea;
}
.sort .sort-on {
  fill: #8d93b0;
}
.row-actions {
  display: flex;
  align-items: center;
  gap: 4px;
  margin-top: -5px;
}
.row-actions button {
  border: 0;
  border-radius: 3px;
  color: #fff;
  font-size: 13.500px;
  font-weight: 600;
  padding: 0;
}
.btn-edit {
  width: 56px;
  height: 34px;
  background: #fdc900;
}
.btn-delete {
  width: 69px;
  height: 36px;
  background: #ff1f44;
}
.table-foot {
  display: flex;
  justify-content: space-between;
  width: 1374px;
}
.table-info {
  margin-top: 8px;
  font-size: 13px;
  line-height: 20px;
  color: #4a4f63;
}
.pager {
  display: flex;
  align-items: center;
  margin-top: 4px;
  padding-right: 17px;
  font-size: 15px;
  color: #6b6b6b;
}
.pager-current {
  width: 38px;
  height: 44px;
  margin: 0 20px 0 19px;
  line-height: 42px;
  text-align: center;
  border: 1px solid #a9a9a9;
  border-radius: 2px;
  background: linear-gradient(#fff, #dcdcdc);
  color: #333;
}

/* modal */
.modal {
  position: absolute;
  left: 316px;
  top: 217px;
  width: 544px;
  height: 366px;
  background: #fff;
  box-shadow: 0 0 12px rgba(0, 0, 0, 0.25);
  padding: 26px 22px 0 23px;
  display: flex;
  flex-direction: column;
  align-items: flex-start;
}
.modal-label {
  height: 20px;
  line-height: 20px;
  margin-bottom: 12px;
  font-size: 15px;
  font-weight: 500;
  color: #3d4668;
}
.modal-select {
  width: 499px;
  display: flex;
  align-items: center;
  justify-content: space-between;
  padding-right: 16px;
}
.file-row {
  margin-top: 52px;
  height: 32px;
  display: flex;
  align-items: center;
  font-size: 15px;
  color: #5c6485;
}
.file-btn {
  height: 32px;
  width: 98px;
  margin: 0 5px 0 4px;
  padding: 0;
  font-size: 15px;
  color: #111;
  background: #efefef;
  border: 1px solid #767676;
  border-radius: 3px;
}
.btn-download {
  width: 189px;
  margin-top: 15px;
  background: #00c2de;
}
.modal-foot {
  margin-top: 70px;
  display: flex;
  gap: 4px;
}
.btn-submit {
  width: 95px;
  height: 40px;
  background: #00f3b0;
}
.btn-cancel {
  width: 94px;
  height: 40px;
  background: #1e2348;
}

/* scrollbar */
.scrollbar {
  width: 18px;
  flex: none;
  position: relative;
  background: #f7f8fb;
}
.scrollbar i {
  position: absolute;
  display: block;
}
.scroll-up {
  top: 10px;
  left: 3px;
  border-left: 6px solid transparent;
  border-right: 6px solid transparent;
  border-bottom: 7px solid #8d8d8d;
}
.scroll-thumb {
  top: 22px;
  left: 4px;
  width: 11px;
  height: 775px;
  border-radius: 6px;
  background: #8c8c8c;
}
.scroll-down {
  bottom: 1px;
  left: 3px;
  border-left: 6px solid transparent;
  border-right: 6px solid transparent;
  border-top: 7px solid #8d8d8d;
}
```
